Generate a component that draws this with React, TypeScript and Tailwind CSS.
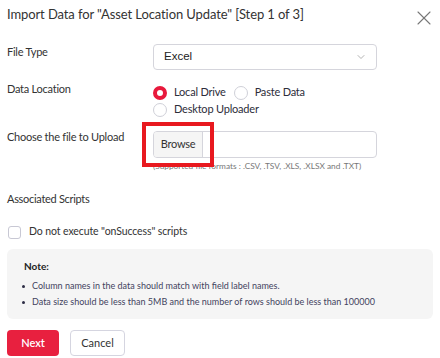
import { ChevronDown, X } from 'lucide-react'

const font = { fontFamily: 'Lato, "Open Sans", sans-serif' }

const Radio = ({ checked, label }: { checked?: boolean; label: string }) => (
  <label className="flex items-center gap-[7px] h-[17px]">
    {checked ? (
      <span className="w-[14px] h-[14px] rounded-full border-[4px] border-[#e8193c] bg-white" />
    ) : (
      <span className="w-[14px] h-[14px] rounded-full border border-[#cfd0d8] bg-white" />
    )}
    <span className="text-[11px] tracking-[-0.2px] text-[#2d2d3a]">{label}</span>
  </label>
)

export default function App() {
  return (
    <div className="w-[440px] h-[358px] bg-white relative overflow-hidden" style={font}>
      <div className="flex items-start justify-between pl-[7px] pr-[4px] pt-[4px] h-[44px]">
        <h1 className="text-[13px] tracking-[-0.1px] text-[#333] leading-[20px]">
          Import Data for "Asset Location Update" [Step 1 of 3]
        </h1>
        <X className="mt-[2px] text-[#777]" size={24} strokeWidth={1.1} />
      </div>

      <div className="grid grid-cols-[146px_224px] pl-[7px] text-[11px] tracking-[-0.25px] text-[#333]">
        <div className="leading-[16px]">File Type</div>
        <div className="h-[26px] border border-[#d5d5dc] rounded-[4px] flex items-center justify-between pl-[10px] pr-[9px]">
          <span className="text-[11.5px] tracking-normal text-[#222]" style={{ fontFamily: '"Liberation Sans", Arial, sans-serif' }}>Excel</span>
          <ChevronDown size={12} strokeWidth={1.5} className="text-[#999]" />
        </div>

        <div className="leading-[16px] mt-[11px]">Data Location</div>
        <div className="mt-[14px] flex flex-col">
          <div className="flex gap-[8px]">
            <Radio checked label="Local Drive" />
            <Radio label="Paste Data" />
          </div>
          <Radio label="Desktop Uploader" />
        </div>

        <div className="leading-[16px] mt-[11px]">Choose the file to Upload</div>
        <div className="mt-[13px] relative">
          <div className="h-[27px] border border-[#d5d5dc] rounded-[4px] flex overflow-hidden">
            <div className="w-[49px] bg-[#f5f5f5] border-r border-[#d5d5dc] flex items-center justify-center text-[11px] text-[#333]">
              Browse
            </div>
          </div>
          <div className="text-[8.3px] tracking-normal text-[#777] mt-[2px] leading-[12px] whitespace-nowrap">
            (Supported file formats : .CSV, .TSV, .XLS, .XLSX and .TXT)
          </div>
          <div className="absolute left-[-11px] top-[-9px] w-[72px] h-[45px] border-[4px] border-[#e8191f]" />
        </div>
      </div>

      <div className="pl-[7px] mt-[19px] leading-[16px] text-[11px] tracking-[-0.3px] text-[#333]">Associated Scripts</div>

      <label className="flex items-center gap-[8px] pl-[8px] mt-[17px] h-[16px]">
        <span className="w-[13px] h-[13px] rounded-[3px] border border-[#c8c8d4] bg-white" />
        <span className="text-[10.5px] tracking-[-0.1px] text-[#333]">Do not execute "onSuccess" scripts</span>
      </label>

      <div className="mx-[7px] mt-[9px] h-[70px] bg-[#f5f5f5] rounded-[6px] pl-[17px] pr-[10px] pt-[10px]">
        <div className="text-[10px] leading-[14px] font-bold text-[#222]">Note:</div>
        <ul className="mt-[6px] flex flex-col gap-[2px] -ml-[2px]">
          <li className="flex items-center gap-[7px] text-[9px] leading-[14px] text-[#43435e]">
            <span className="w-[3px] h-[3px] rounded-full bg-[#2d2d45]" />
            Column names in the data should match with field label names.
          </li>
          <li className="flex items-center gap-[7px] text-[9px] leading-[14px] text-[#43435e]">
            <span className="w-[3px] h-[3px] rounded-full bg-[#2d2d45]" />
            Data size should be less than 5MB and the number of rows should be less than 100000
          </li>
        </ul>
      </div>

      <div className="flex gap-[11px] pl-[7px] mt-[11px]">
        <button className="w-[52px] h-[26px] rounded-[4px] bg-[#e8203f] text-white text-[11px] font-semibold">Next</button>
        <button className="w-[55px] h-[26px] rounded-[4px] border border-[#d5d5e0] bg-white text-[#333] text-[11px]">Cancel</button>
      </div>
    </div>
  )
}
